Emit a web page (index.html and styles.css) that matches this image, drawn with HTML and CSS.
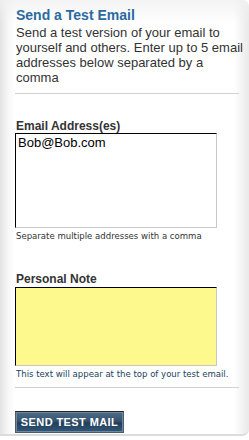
FILE: index.html
```html
<!DOCTYPE html>
<html lang="en">
<head>
  <meta charset="UTF-8" />
  <title>Send a Test Email</title>
  <link rel="stylesheet" href="styles.css">
</head>
<body>
  <div class="panel">
    <h2>Send a Test Email</h2>
    <p class="intro">Send a test version of your email to yourself and others. Enter up to 5 email addresses below separated by a comma</p>

    <hr class="rule" />

    <form id="testForm">
      <label for="emails" class="first">Email Address(es)</label>
      <textarea id="emails" name="emails">Bob@Bob.com</textarea>
      <div class="hint">Separate multiple addresses with a comma</div>

      <label for="note" class="second">Personal Note</label>
      <textarea id="note" name="note" class="note"></textarea>
      <div class="hint blue">This text will appear at the top of your test email.</div>

      <hr class="rule rule-low" />

      <button type="submit">Send Test Mail</button>
    </form>
  </div>
</body>
</html>
```

FILE: styles.css
```css
body {
  margin: 0;
  background: #fff;
  font-family: 'Liberation Sans', Arial, sans-serif;
  color: #333;
}

.panel {
  height: 427px;
  padding: 7px 10px 0 15px;
  border-radius: 0 7px 7px 0;
  border-bottom: 2px solid #dcdcdc;
  background:
    linear-gradient(to bottom, rgba(240,240,240,0.8), rgba(255,255,255,0) 24px),
    linear-gradient(to right, #e3e3e3 0, #f7f7f7 8px, #fff 15px, #fff 234px, #f3f3f3 242px, #e9e9e9 100%);
}

h2 {
  margin: 0 0 0 1px;
  font-size: 14px;
  line-height: 17px;
  color: #2a6aa0;
}

.intro {
  margin: 1px -8px 0 1px;
  font-size: 13px;
  line-height: 15px;
}

.rule {
  border: none;
  border-top: 1px solid #d2d2d2;
  margin: 8px 0 0;
}

form label {
  display: block;
  font-size: 12px;
  font-weight: bold;
  line-height: 14px;
  margin-left: 1px;
}

form label.first {
  margin-top: 25px;
}

form label.second {
  margin-top: 30px;
}

form textarea {
  display: block;
  box-sizing: border-box;
  width: 202px;
  height: 95px;
  margin: 0;
  padding: 1px 2px;
  border: 1px solid #c8c8c8;
  border-top-color: #000;
  border-left-color: #000;
  background: #fff;
  font-family: inherit;
  font-size: 13px;
  line-height: 15px;
  color: #000;
  resize: none;
}

form textarea.note {
  height: 79px;
  margin-top: 1px;
  background: #fdf98d;
}

.hint {
  margin: 1px 0 0 1px;
  font-family: 'DejaVu Sans Condensed', 'DejaVu Sans', Verdana, sans-serif;
  font-size: 9.5px;
  line-height: 13px;
  white-space: nowrap;
  color: #333;
}

.hint.blue {
  color: #1d3f60;
}

.rule-low {
  margin-top: 7px;
}

form button {
  display: block;
  margin-top: 23px;
  width: 109px;
  height: 22px;
  padding: 0;
  border: 1px solid #4b5c6b;
  border-top-color: #1f262d;
  box-shadow: inset 0 0 0 1px #6f889c;
  background: linear-gradient(to bottom, #4e6d88 0, #35536e 45%, #213e58 55%, #32587a 100%);
  color: #fff;
  font-family: inherit;
  font-size: 11px;
  font-weight: bold;
  text-transform: uppercase;
  letter-spacing: 0.4px;
  cursor: pointer;
}
```
